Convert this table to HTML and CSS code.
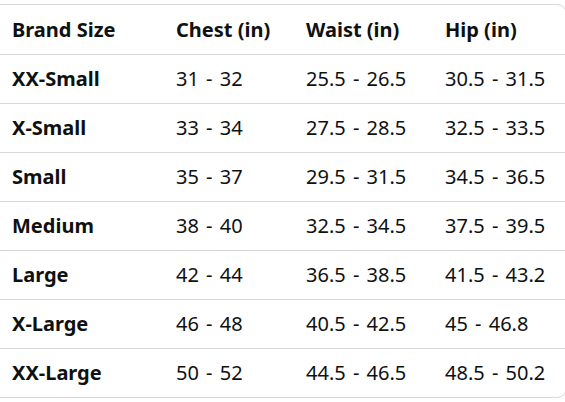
FILE: index.html
```html
<!DOCTYPE html>
<html lang="en">
<head>
    <meta charset="UTF-8">
    <title>Size chart</title>
    <link rel="stylesheet" href="styles.css">
</head>
<body>
    <div class="chart">
        <table class="sizes">
            <thead>
                <tr>
                    <th class="c1">Brand Size</th>
                    <th class="c2">Chest (in)</th>
                    <th class="c3">Waist (in)</th>
                    <th class="c4">Hip (in)</th>
                </tr>
            </thead>
            <tbody>
                <tr><th>XX-Small</th><td>31 - 32</td><td>25.5 - 26.5</td><td>30.5 - 31.5</td></tr>
                <tr><th>X-Small</th><td>33 - 34</td><td>27.5 - 28.5</td><td>32.5 - 33.5</td></tr>
                <tr><th>Small</th><td>35 - 37</td><td>29.5 - 31.5</td><td>34.5 - 36.5</td></tr>
                <tr><th>Medium</th><td>38 - 40</td><td>32.5 - 34.5</td><td>37.5 - 39.5</td></tr>
                <tr><th>Large</th><td>42 - 44</td><td>36.5 - 38.5</td><td>41.5 - 43.2</td></tr>
                <tr><th>X-Large</th><td>46 - 48</td><td>40.5 - 42.5</td><td>45 - 46.8</td></tr>
                <tr><th>XX-Large</th><td>50 - 52</td><td>44.5 - 46.5</td><td>48.5 - 50.2</td></tr>
            </tbody>
        </table>
    </div>
</body>
</html>
```

FILE: styles.css
```css
* {
    box-sizing: border-box;
    margin: 0;
    padding: 0;
}

html,
body {
    height: 100%;
    overflow: hidden;
    background: #fff;
}

body {
    font-family: "Noto Sans", "Open Sans", sans-serif;
    color: #0f1111;
    padding-top: 4px;
}

.chart {
    width: 577px;
    margin-left: -10px;
    border: 1px solid #d5d9d9;
    border-radius: 10px;
    overflow: hidden;
}

.sizes {
    width: 100%;
    border-collapse: collapse;
    table-layout: fixed;
    font-size: 20px;
}

.sizes th,
.sizes td {
    height: 49px;
    text-align: left;
    vertical-align: middle;
    white-space: nowrap;
    border-bottom: 1px solid #d5d9d9;
}

.sizes th {
    font-weight: 700;
}

.sizes td {
    font-weight: 400;
    word-spacing: 2px;
}

.sizes tbody tr:last-child th,
.sizes tbody tr:last-child td {
    border-bottom: none;
}

.c1 { width: 185px; padding-left: 21px; }
.c2 { width: 130px; }
.c3 { width: 139px; }

.sizes tbody th {
    padding-left: 21px;
}
```
